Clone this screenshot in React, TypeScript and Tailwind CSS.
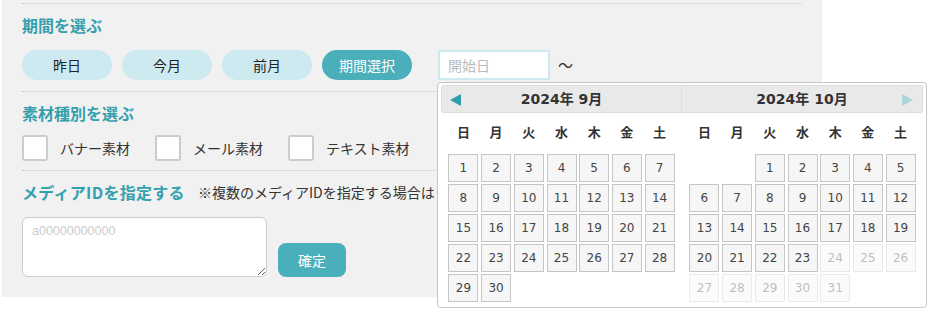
import React from "react";

const JP = { fontFamily: '"Noto Sans CJK JP", "Noto Sans", sans-serif' };
const NUM = { fontFamily: '"DejaVu Sans", "Noto Sans CJK JP", sans-serif' };

const days = ["日", "月", "火", "水", "木", "金", "土"];

function Month({
  title,
  offset,
  count,
  disabledFrom,
  side,
}: {
  title: string;
  offset: number;
  count: number;
  disabledFrom: number;
  side: "left" | "right";
}) {
  const cells: (number | null)[] = [];
  for (let i = 0; i < offset; i++) cells.push(null);
  for (let d = 1; d <= count; d++) cells.push(d);
  return (
    <div className="flex-1 flex flex-col">
      <div
        className={
          side === "left"
            ? "relative h-[28px] bg-[#e9e9e9] border border-[#dddddd] rounded-l-[3px] flex items-center justify-center"
            : "relative h-[28px] bg-[#e9e9e9] border-y border-r border-[#dddddd] rounded-r-[3px] flex items-center justify-center"
        }
      >
        {side === "left" ? (
          <svg className="absolute left-[8px] top-[8px]" width="11" height="12" viewBox="0 0 11 12">
            <polygon points="11,0 11,12 0,6" fill="#2f9dab" />
          </svg>
        ) : (
          <svg className="absolute right-[9px] top-[8px]" width="11" height="12" viewBox="0 0 11 12">
            <polygon points="0,0 0,12 11,6" fill="#a9d5db" />
          </svg>
        )}
        <span className="text-[14px] font-bold text-[#333333]" style={NUM}>
          {title}
        </span>
      </div>
      <div className="flex justify-center">
        <div className="grid grid-cols-[repeat(7,30px)] gap-x-[2.7px] h-[38px] items-center">
          {days.map((d) => (
            <div key={d} className="text-center text-[13px] font-bold text-[#333333]" style={JP}>
              {d}
            </div>
          ))}
        </div>
      </div>
      <div className="flex justify-center mt-[3px]">
        <div className="grid grid-cols-[repeat(7,30px)] gap-x-[2.7px] gap-y-[2px] auto-rows-[28px]">
          {cells.map((c, i) =>
            c === null ? (
              <div key={i} />
            ) : c >= disabledFrom ? (
              <div
                key={i}
                className="border border-[#c5c5c5] bg-[#f6f6f6] text-[#454545] text-[12px] flex items-center justify-center opacity-[0.35]"
                style={NUM}
              >
                {c}
              </div>
            ) : (
              <div
                key={i}
                className="border border-[#c5c5c5] bg-[#f6f6f6] text-[#454545] text-[12px] flex items-center justify-center"
                style={NUM}
              >
                {c}
              </div>
            )
          )}
        </div>
      </div>
    </div>
  );
}

function Pill({ label, active }: { label: string; active?: boolean }) {
  return (
    <div
      className={
        active
          ? "w-[90px] h-[30px] rounded-full bg-[#4aafba] text-white text-[14px] flex items-center justify-center"
          : "w-[90px] h-[30px] rounded-full bg-[#cdeaf0] text-[#222222] text-[14px] flex items-center justify-center"
      }
    >
      {label}
    </div>
  );
}

function Check({ label }: { label: string }) {
  return (
    <div className="flex items-center mr-[25px]">
      <div className="w-[26px] h-[26px] border-2 border-[#cccccc] rounded-[3px] bg-white" />
      <span className="ml-[12px] text-[14px] text-[#333333] leading-[20px]">{label}</span>
    </div>
  );
}

export default function App() {
  return (
    <div className="w-[952px] h-[324px] bg-white overflow-hidden" style={JP}>
      <div className="ml-[2px] w-[820px] bg-[#f1f1f1] px-[20px] pt-[3px]">
        {/* Section 1 */}
        <div className="border-t border-dotted border-[#c8c8c8] pt-[9px] pb-[11px]">
          <div className="h-[24px] leading-[24px] text-[16px] font-bold text-[#35a0ad]">期間を選ぶ</div>
          <div className="mt-[13px] flex items-center">
            <div className="flex gap-[10px]">
              <Pill label="昨日" />
              <Pill label="今月" />
              <Pill label="前月" />
              <Pill label="期間選択" active />
            </div>
            <div className="relative ml-[26px]">
              <input
                readOnly
                placeholder="開始日"
                className="block w-[112px] h-[30px] border-2 border-[#cdeaf0] bg-white px-[8px] text-[14px] outline-none placeholder:text-[#bbbbbb]"
                style={JP}
              />
              <div className="absolute left-[-1px] top-[32px] z-10 w-[490px] bg-white border border-[#c5c5c5] rounded-[4px] px-[3px] pt-[2px] pb-[5px]">
                <div className="flex">
                  <Month title="2024年 9月" offset={0} count={30} disabledFrom={99} side="left" />
                  <Month title="2024年 10月" offset={2} count={31} disabledFrom={24} side="right" />
                </div>
              </div>
            </div>
            <span className="ml-[8px] text-[15px] text-[#333333]">〜</span>
          </div>
        </div>
        {/* Section 2 */}
        <div className="border-t border-dotted border-[#c8c8c8] pt-[9px] pb-[9px]">
          <div className="h-[24px] leading-[24px] text-[16px] font-bold text-[#35a0ad]">素材種別を選ぶ</div>
          <div className="mt-[10px] flex items-center">
            <Check label="バナー素材" />
            <Check label="メール素材" />
            <Check label="テキスト素材" />
          </div>
        </div>
        {/* Section 3 */}
        <div className="border-t border-dotted border-[#c8c8c8] pt-[9px] pb-[20px]">
          <div className="h-[24px] flex items-center">
            <span className="text-[16px] font-bold text-[#35a0ad] leading-[24px] tracking-[0.3px]">メディアIDを指定する</span>
            <span className="ml-[13px] text-[14px] text-[#333333] leading-[24px] whitespace-nowrap">
              ※複数のメディアIDを指定する場合は
            </span>
          </div>
          <div className="mt-[13px] flex items-end gap-[11px]">
            <textarea
              placeholder="a00000000000"
              className="block w-[245px] h-[60px] bg-white border border-[#cccccc] rounded-[6px] px-[9px] py-[4px] text-[12.5px] outline-none placeholder:text-[#cccccc]"
              style={{ fontFamily: '"Liberation Sans", "Noto Sans CJK JP", sans-serif' }}
            />
            <div className="w-[68px] h-[34px] rounded-[8px] bg-[#4aafba] text-white text-[14px] flex items-center justify-center">
              確定
            </div>
          </div>
        </div>
      </div>
    </div>
  );
}
